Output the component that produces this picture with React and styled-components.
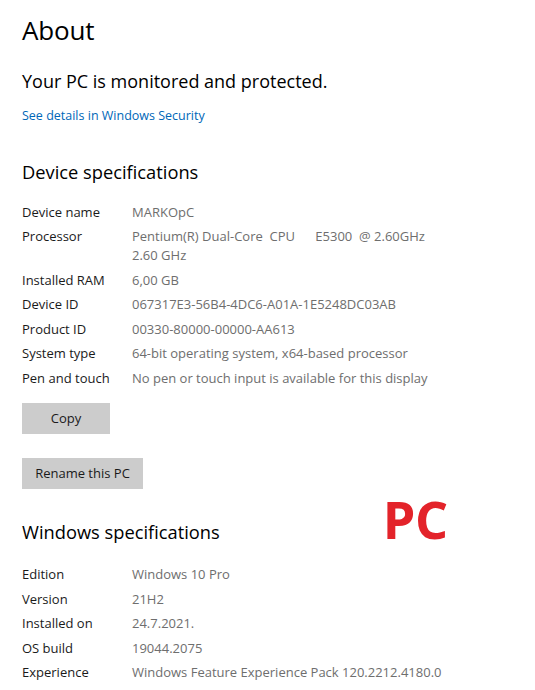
import React from 'react'
import styled, { createGlobalStyle } from 'styled-components'

const GlobalStyle = createGlobalStyle`
  html, body {
    margin: 0;
    padding: 0;
    background: #ffffff;
  }
  body {
    font-family: "Open Sans", "Noto Sans", sans-serif;
    color: #000;
  }
`;

const deviceSpecs = [
  { label: 'Device name', value: 'MARKOpC' },
  { label: 'Processor', value: 'Pentium(R) Dual-Core  CPU      E5300  @ 2.60GHz', extra: '2.60 GHz' },
  { label: 'Installed RAM', value: '6,00 GB' },
  { label: 'Device ID', value: '067317E3-56B4-4DC6-A01A-1E5248DC03AB' },
  { label: 'Product ID', value: '00330-80000-00000-AA613' },
  { label: 'System type', value: '64-bit operating system, x64-based processor' },
  { label: 'Pen and touch', value: 'No pen or touch input is available for this display' },
];

const windowsSpecs = [
  { label: 'Edition', value: 'Windows 10 Pro' },
  { label: 'Version', value: '21H2' },
  { label: 'Installed on', value: '24.7.2021.' },
  { label: 'OS build', value: '19044.2075' },
  { label: 'Experience', value: 'Windows Feature Experience Pack 120.2212.4180.0' },
];

const SpecTable = ({ items, top }) => (
  <Table $top={top}>
    {items.map((item) => (
      <Row key={item.label}>
        <Label>{item.label}</Label>
        <Value>
          {item.value}
          {item.extra && <><br />{item.extra}</>}
        </Value>
      </Row>
    ))}
  </Table>
);

export default function App() {
  return (
    <>
      <GlobalStyle />
      <Page>
        <Title>About</Title>
        <Status>Your PC is monitored and protected.</Status>
        <Link>See details in Windows Security</Link>

        <SectionHeading $top={34}>Device specifications</SectionHeading>
        <SpecTable items={deviceSpecs} top={15} />
        <Button $width={88}>Copy</Button>
        <Button $width={121} $top={24}>Rename this PC</Button>

        <HeadingRow>
          <SectionHeading>Windows specifications</SectionHeading>
          <Stamp>PC</Stamp>
        </HeadingRow>
        <SpecTable items={windowsSpecs} top={18} />
      </Page>
    </>
  );
}

const Page = styled.div`
  display: flex;
  flex-direction: column;
  align-items: flex-start;
  padding: 12px 22px 0;
  width: 535px;
  height: 690px;
  box-sizing: border-box;
  overflow: hidden;
`;

const Title = styled.h1`
  margin: 0;
  font-size: 26px;
  font-weight: 400;
  line-height: 36px;
  letter-spacing: -0.2px;
`;

const Status = styled.div`
  margin-top: 20px;
  font-size: 18px;
  line-height: 26px;
`;

const Link = styled.div`
  margin-top: 13px;
  font-size: 12.5px;
  line-height: 18px;
  color: #0067b8;
`;

const SectionHeading = styled.h2`
  margin: ${(p) => p.$top ?? 0}px 0 0;
  font-size: 18.3px;
  font-weight: 400;
  line-height: 26px;
`;

const HeadingRow = styled.div`
  display: flex;
  align-items: baseline;
  margin-top: 4px;
  width: 100%;
`;

const Stamp = styled.div`
  margin-left: 163px;
  font-size: 52px;
  font-weight: 700;
  color: #e3232a;
  line-height: 52px;
  letter-spacing: -0.5px;
`;

const Table = styled.div`
  display: flex;
  flex-direction: column;
  margin-top: ${(p) => p.$top}px;
`;

const Row = styled.div`
  display: flex;
  font-size: 13px;
  line-height: 19px;
  padding: 2.75px 0;
`;

const Label = styled.div`
  width: 110px;
  flex-shrink: 0;
  color: #1a1a1a;
`;

const Value = styled.div`
  color: #6e6e6e;
  white-space: pre;
`;

const Button = styled.div`
  display: flex;
  align-items: center;
  justify-content: center;
  width: ${(p) => p.$width}px;
  height: 31px;
  margin-top: ${(p) => p.$top ?? 12}px;
  background: #cccccc;
  font-size: 13px;
  color: #1a1a1a;
`;
